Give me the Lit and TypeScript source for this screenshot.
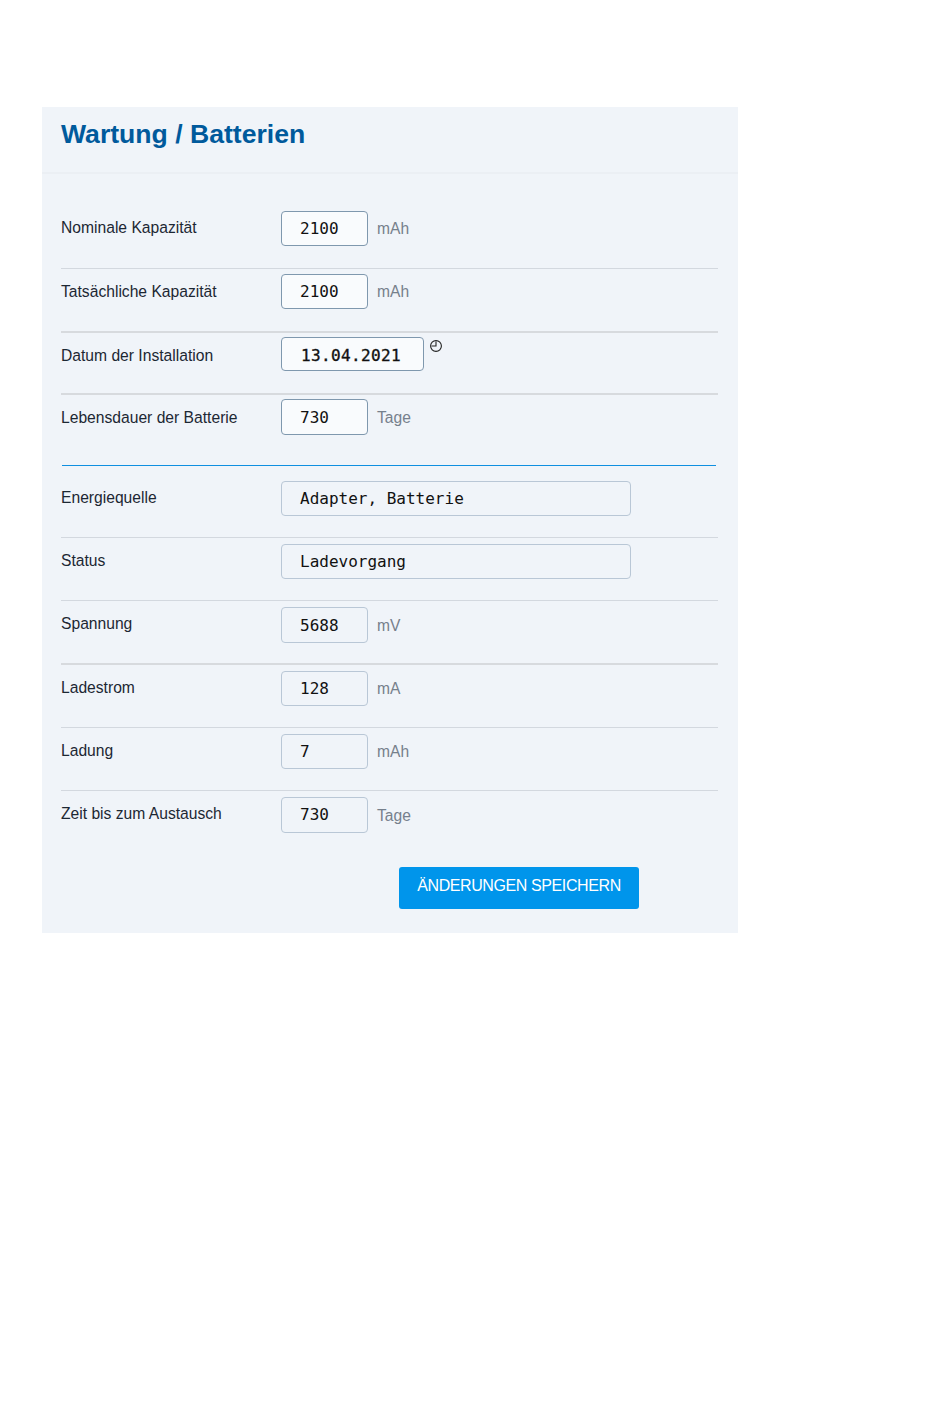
import { LitElement, html, css, nothing } from "lit";
import { customElement } from "lit/decorators.js";

type Row = {
  label: string; value: string; unit?: string; kind?: string;
  height: number; pad: number; box?: number; lh?: number; labelTop?: number; unitTop?: number;
  rule?: "thin" | "thick";
};

const top: Row[] = [
  { label: "Nominale Kapazität", value: "2100", unit: "mAh", height: 63, pad: 5, rule: "thin" },
  { label: "Tatsächliche Kapazität", value: "2100", unit: "mAh", height: 64, pad: 5, labelTop: 9, rule: "thick" },
  { label: "Datum der Installation", value: "13.04.2021", kind: "date", height: 62, pad: 4, box: 34, lh: 35, labelTop: 10, rule: "thick" },
  { label: "Lebensdauer der Batterie", value: "730", unit: "Tage", height: 40, pad: 4, box: 36, lh: 35, labelTop: 10, unitTop: 10 },
];
const bottom: Row[] = [
  { label: "Energiequelle", value: "Adapter, Batterie", kind: "wide", height: 63, pad: 6, rule: "thin" },
  { label: "Status", value: "Ladevorgang", kind: "wide", height: 63, pad: 6, rule: "thin" },
  { label: "Spannung", value: "5688", unit: "mV", height: 64, pad: 6, box: 36, lh: 35, unitTop: 10, rule: "thick" },
  { label: "Ladestrom", value: "128", unit: "mA", height: 63, pad: 6, rule: "thin" },
  { label: "Ladung", value: "7", unit: "mAh", height: 63, pad: 6, rule: "thin" },
  { label: "Zeit bis zum Austausch", value: "730", unit: "Tage", height: 42, pad: 6, box: 36, lh: 34, unitTop: 10 },
];

@customElement("app-root")
export class AppRoot extends LitElement {
  static styles = css`
    :host { display: block; min-height: 1408px; background: #fff; padding: 107px 212px 0 42px; box-sizing: border-box; font-family: "Liberation Sans", Arial, sans-serif; }
    .panel { background: #f0f4f9; height: 826px; box-sizing: border-box; }
    .head { height: 67px; box-sizing: border-box; border-bottom: 2px solid #ebeff4; padding: 10px 19px 0; }
    h1 { margin: 0; font-size: 26.6px; line-height: 34px; font-weight: 700; color: #005a9c; }
    .body { padding: 32px 20px 0 19px; }
    .row { display: grid; grid-template-columns: 220px 1fr; box-sizing: border-box; }
    .row.thin { border-bottom: 1px solid #d3d8df; }
    .row.thick { border-bottom: 2px solid #d7dade; }
    .label { font-size: 15.65px; line-height: 18px; color: #1c2733; }
    .field { display: flex; align-items: flex-start; }
    .box { box-sizing: border-box; width: 87px; border: 1px solid #7f98ae; border-radius: 4px; background: #f9fbfd; font-family: "DejaVu Sans Mono", monospace; font-size: 16px; color: #111; padding-left: 18px; white-space: pre; }
    .box.date { width: 143px; padding-left: 19px; letter-spacing: 0.37px; -webkit-text-stroke: 0.35px #111; }
    .box.ro { background: #f0f4f9; border-color: #b9c7d6; }
    .box.wide { width: 350px; }
    .unit { font-size: 15.6px; line-height: 18px; color: #76808c; margin-left: 9px; }
    .clock { margin: 2px 0 0 5px; width: 14px; height: 14px; display: block; }
    .divider { height: 1px; background: #0f8fe0; margin: 30px 2px 9px 1px; }
    .foot { display: flex; padding: 34px 0 0 338px; }
    button { all: unset; box-sizing: border-box; width: 240px; height: 42px; padding-bottom: 4px; background: #0095eb; border-radius: 3px; color: #fff; font: 16px/18px "Liberation Sans", Arial, sans-serif; letter-spacing: -0.4px; text-align: center; }
  `;

  private renderRow(r: Row, ro: boolean) {
    const box = r.box ?? 35;
    return html`<div class="row ${r.rule ?? ""}" style="height:${r.height}px;padding-top:${r.pad}px">
      <div class="label" style="padding-top:${r.labelTop ?? 8}px">${r.label}</div>
      <div class="field">
        <div class="box ${r.kind ?? ""} ${ro ? "ro" : ""}" style="height:${box}px;line-height:${r.lh ?? 33}px">${r.value}</div>
        ${r.unit ? html`<span class="unit" style="margin-top:${r.unitTop ?? 9}px">${r.unit}</span>` : nothing}
        ${r.kind === "date"
          ? html`<svg class="clock" viewBox="0 0 14 14" fill="none" stroke="#222" stroke-width="1.1"><circle cx="7" cy="7" r="5.4"/><path d="M7 2.5V7H2.5"/></svg>`
          : nothing}
      </div>
    </div>`;
  }

  render() {
    return html`<div class="panel">
      <div class="head"><h1>Wartung / Batterien</h1></div>
      <div class="body">
        ${top.map((r) => this.renderRow(r, false))}
        <div class="divider"></div>
        ${bottom.map((r) => this.renderRow(r, true))}
        <div class="foot"><button>ÄNDERUNGEN SPEICHERN</button></div>
      </div>
    </div>`;
  }
}
